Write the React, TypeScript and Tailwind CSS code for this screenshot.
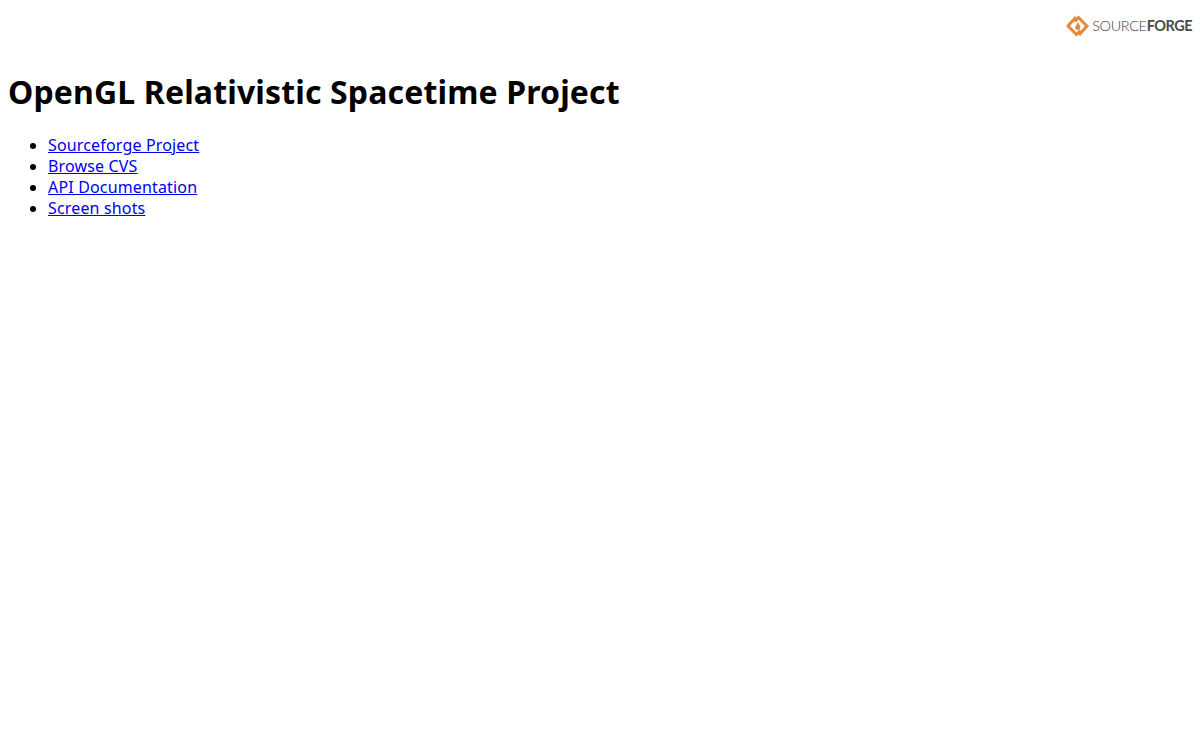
// App.tsx
function SourceforgeLogo() {
  return (
    <div className="flex items-center h-[22px]">
      <svg width="23" height="22" viewBox="0 0 23 22" className="mr-[3px]">
        <path d="M10 2 L2 11 L10.5 19.5 L14.5 15.5" fill="none" stroke="#e8873a" strokeWidth="3" />
        <path d="M13 20 L21 11 L12.5 2.5 L8.5 6.5" fill="none" stroke="#e8873a" strokeWidth="3" />
        <path d="M11.8 6.8 C12.3 9 14.6 10.2 14.3 12.5 C14.1 14 13 14.9 11.6 14.9 C10.2 14.9 9.1 13.8 9.2 12.4 C9.3 10.8 11.3 9.6 11.8 6.8 Z" fill="#e8873a" />
      </svg>
      <span className="font-['Lato',sans-serif] text-[14.5px] font-light leading-none tracking-[-0.38px] text-[#3f4042]">
        SOURCE<span className="font-bold tracking-[-0.5px] text-[#4a4a4c]">FORGE</span>
      </span>
    </div>
  );
}

export default function App() {
  const links = ['Sourceforge Project', 'Browse CVS', 'API Documentation', 'Screen shots'];

  return (
    <div className="min-h-[740px] bg-white p-2 font-['Noto_Sans',sans-serif] text-black">
      <div className="flex justify-end mt-[7px]">
        <SourceforgeLogo />
      </div>
      <h1 className="mt-[32px] text-[32px] font-bold leading-[46px] tracking-[0.14px]">
        OpenGL Relativistic Spacetime Project
      </h1>
      <ul className="mt-[20px] list-disc pl-10 text-base leading-[21px] tracking-[0.16px]">
        {links.map((link) => (
          <li key={link}>
            <a href="#" className="text-[#0000ee] underline">
              {link}
            </a>
          </li>
        ))}
      </ul>
    </div>
  );
}
